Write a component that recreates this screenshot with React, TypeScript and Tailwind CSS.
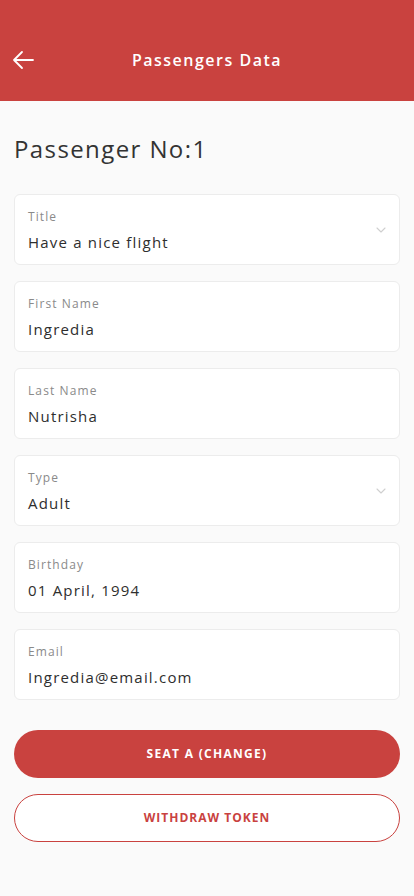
import React from 'react';

const Chevron: React.FC = () => (
  <svg width="16" height="16" viewBox="0 0 24 24" fill="none" stroke="#cfcfcf" strokeWidth="1.6" strokeLinecap="round" strokeLinejoin="round">
    <path d="M6 9l6 6 6-6" />
  </svg>
);

type FieldProps = { label: string; value: string; select?: boolean };

const Field: React.FC<FieldProps> = ({ label, value, select }) => (
  <div className="h-[71px] bg-white border border-[#ececec] rounded-md pl-[13px] pr-[10px] flex items-center justify-between">
    <div className="flex flex-col">
      <span className="text-[12px] leading-[16px] text-[#8a8a8a] tracking-[1.1px]">{label}</span>
      <span className="mt-[8px] text-[15px] leading-[18px] text-[#2e2e2e] tracking-[1.2px]">{value}</span>
    </div>
    {select && <Chevron />}
  </div>
);

const App: React.FC = () => {
  return (
    <div className="min-h-[896px] bg-[#fafafa]" style={{ fontFamily: '"Open Sans", "Noto Sans", sans-serif' }}>
      <header className="h-[101px] bg-[#c9423f] relative flex items-center justify-center pt-[18px]">
        <button className="absolute left-[12px] top-[50px]">
          <svg width="22" height="20" viewBox="0 0 22 20" fill="none" stroke="white" strokeWidth="1.8" strokeLinecap="round" strokeLinejoin="round">
            <path d="M21 10H2M10 2L2 10l8 8" />
          </svg>
        </button>
        <h1 className="text-white text-[16px] font-semibold tracking-[1.5px]">Passengers Data</h1>
      </header>

      <main className="px-[14px]">
        <h2 className="mt-[32px] text-[24px] leading-[32px] text-[#333] tracking-[1.4px]">Passenger No:1</h2>

        <div className="mt-[29px] flex flex-col gap-[16px]">
          <Field label="Title" value="Have a nice flight" select />
          <Field label="First Name" value="Ingredia" />
          <Field label="Last Name" value="Nutrisha" />
          <Field label="Type" value="Adult" select />
          <Field label="Birthday" value="01 April, 1994" />
          <Field label="Email" value="Ingredia@email.com" />
        </div>

        <div className="mt-[30px] flex flex-col gap-[16px]">
          <button className="h-[48px] rounded-full bg-[#c9423f] text-white text-[12px] font-bold tracking-[1.3px]">
            SEAT A (CHANGE)
          </button>
          <button className="h-[48px] rounded-full border border-[#c9423f] bg-white text-[#c9423f] text-[12px] font-bold tracking-[1px]">
            WITHDRAW TOKEN
          </button>
        </div>
      </main>
    </div>
  );
};

export default App;
